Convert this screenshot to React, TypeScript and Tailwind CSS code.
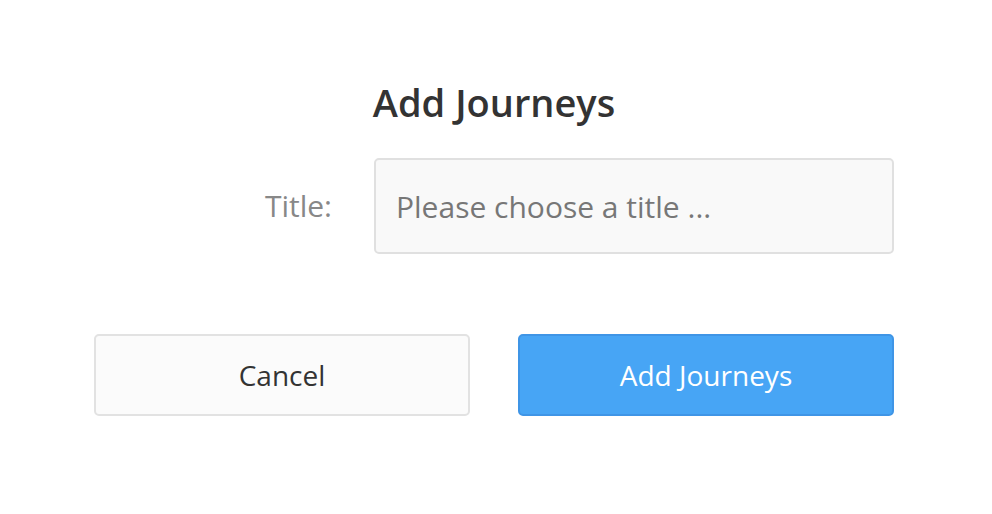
import React from "react";

export default function App() {
  return (
    <div className="w-[992px] h-[514px] bg-white" style={{ fontFamily: '"Open Sans", sans-serif' }}>
      <div className="ml-[94px] w-[800px] pt-[76px] flex flex-col">
        <h1 className="text-center text-[38px] leading-[52px] font-semibold text-[#333333]">Add Journeys</h1>
        <div className="mt-[30px] flex items-center">
          <label className="w-[238px] text-right text-[30px] leading-[40px] text-[#888888]">Title:</label>
          <input
            className="ml-[42px] flex-1 h-[96px] rounded-[5px] border-2 border-[#e0e0e0] bg-[#f9f9f9] px-[20px] text-[30px] text-[#333] placeholder:text-[#777777] outline-none"
            placeholder="Please choose a title ..."
          />
        </div>
        <div className="mt-[80px] flex gap-[48px]">
          <button className="flex-1 h-[82px] rounded-[5px] border-2 border-[#e2e2e2] bg-[#fbfbfb] text-[28px] text-[#333333]">Cancel</button>
          <button className="flex-1 h-[82px] rounded-[5px] border-2 border-[#3f95e6] bg-[#47a5f5] text-[28px] text-white">Add Journeys</button>
        </div>
      </div>
    </div>
  );
}
